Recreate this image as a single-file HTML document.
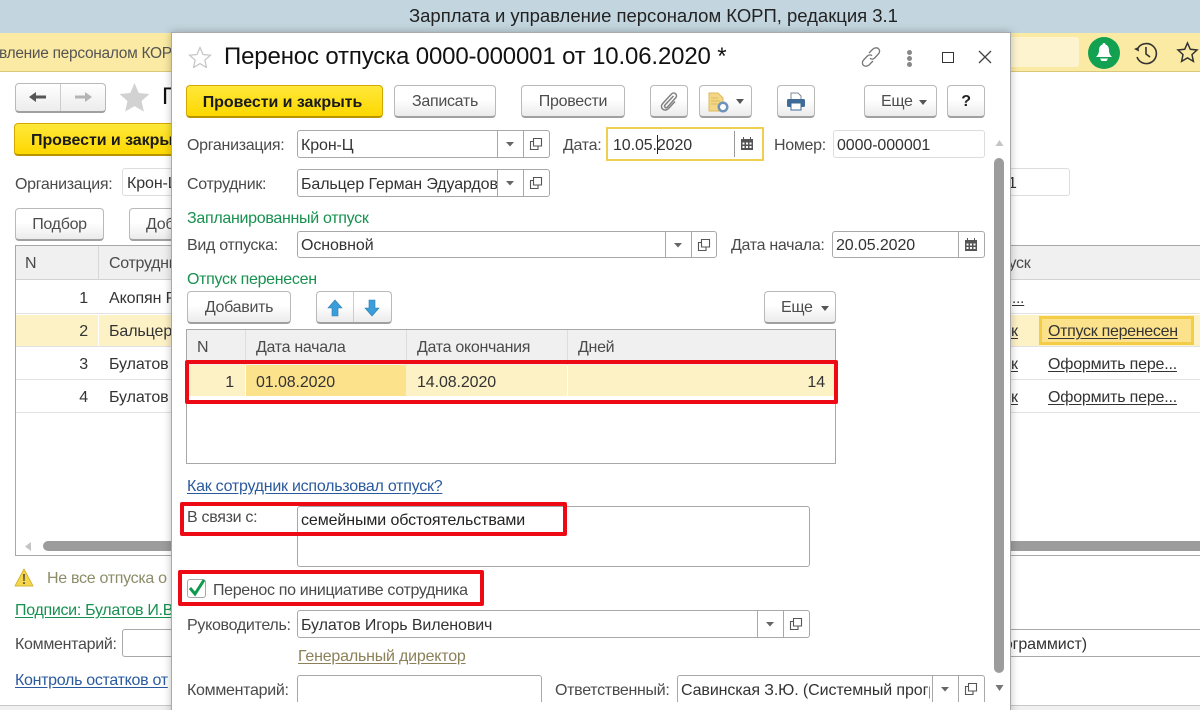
<!DOCTYPE html>
<html><head><meta charset="utf-8"><style>
html,body{margin:0;padding:0;background:#fff}
#r{position:relative;width:1200px;height:710px;overflow:hidden;background:#fff;font-family:"Liberation Sans","Noto Sans CJK SC",sans-serif;font-size:16px;letter-spacing:-.3px;color:#4a4a4a}
#r div,#r a,#r svg{position:absolute;box-sizing:border-box}
.t{white-space:nowrap;line-height:20px;height:20px;margin-top:2px}
.v{color:#333;letter-spacing:-.1px}
.b{border:1px solid #b9b9b9;border-bottom:2px solid #a0a0a0;border-radius:4px;background:linear-gradient(#fff 0%,#fff 45%,#ebebeb 100%);text-align:center;color:#4d4d4d;line-height:31px;white-space:nowrap}
.y{border:1px solid #d2a900;border-bottom:2px solid #b89400;border-radius:4px;background:linear-gradient(#ffe83a,#fdd800);text-align:center;color:#1a1a1a;font-weight:bold;letter-spacing:-.05px;line-height:33px;white-space:nowrap}
.f{border:1px solid #a8a8a8;border-radius:3px;background:#fff}
.lf{border:1px solid #ddd;border-radius:3px;background:#fff}
.d{width:1px;background:#a8a8a8}
.u{text-decoration:underline;text-underline-offset:2px}
.red{border:4px solid #ee0a14;border-radius:2px}
.l{height:1px;background:#e2e2e2}
</style></head><body><div id="r">

<!-- top bars -->
<div style="left:0;top:0;width:1200px;height:33px;background:#c3d5de"></div>
<div class="t" style="left:409px;top:6px;margin-top:0;font-size:18.5px;letter-spacing:-.02px;color:#222">Зарплата и управление персоналом КОРП, редакция 3.1</div>
<div style="left:0;top:33px;width:1200px;height:39px;background:#fbeaa3;border-bottom:1px solid #d9c877"></div>
<div class="t" style="left:-1px;top:42px;color:#555;font-size:15.5px">вление персоналом КОРП</div>
<div style="left:1005px;top:37px;width:74px;height:30px;background:#fdf4cf;border-radius:3px"></div>
<div style="left:1088px;top:37px;width:32px;height:32px;border-radius:50%;background:#12a150"></div>
<svg style="left:1094px;top:42px" width="20" height="22" viewBox="0 0 20 22"><path d="M10 1c-1 0-1.500.8-1.500 1.500C6 3.500 5 5.500 5 8c0 3-1 5-3 7h16c-2-2-3-4-3-7 0-2.500-1-4.500-3.500-5.500C11.500 1.800 11 1 10 1z" fill="#fff"/><path d="M6 16.500h8l-1.500 2.500h-5z" fill="#fff"/></svg>
<svg style="left:1132px;top:39px" width="28" height="28" viewBox="0 0 28 28" fill="none" stroke="#333" stroke-width="1.600"><path d="M5.500 10A10 10 0 1 1 5 18"/><path d="M14 8v7l4 3"/><path d="M2 10l4.500-2 .5 4.500z" fill="#333" stroke="none"/></svg>
<svg style="left:1176px;top:41px" width="23" height="23" viewBox="0 0 23 23"><path d="M11.500 2l2.800 6.300 6.700.7-5 4.600 1.400 6.800-5.900-3.500-5.900 3.500 1.400-6.800-5-4.600 6.700-.7z" fill="none" stroke="#333" stroke-width="1.500"/></svg>

<!-- background form -->
<div style="left:15px;top:83px;width:91px;height:30px;border:1px solid #b9b9b9;border-bottom:2px solid #a0a0a0;border-radius:4px;background:linear-gradient(#fff,#ececec)"></div>
<div class="d" style="left:60px;top:84px;height:27px;background:#ccc"></div>
<svg style="left:28px;top:89px" width="20" height="16" viewBox="0 0 20 16"><path d="M1 8l7-5v3.500h10v3H8V13z" fill="#555"/></svg>
<svg style="left:73px;top:89px" width="20" height="16" viewBox="0 0 20 16"><path d="M19 8l-7-5v3.500H2v3h10V13z" fill="#b4b4b4"/></svg>
<svg style="left:119px;top:82px" width="31" height="30" viewBox="0 0 31 30"><path d="M15.500 1l4.300 10 10.700 1-8 7.100 2.400 10.500-9.400-5.500-9.400 5.500 2.400-10.500-8-7.100 10.700-1z" fill="#d2d2d2"/></svg>
<div class="t" style="left:162px;top:87px;margin-top:0;font-size:24px;color:#111">П</div>
<div class="y" style="left:14px;top:123px;width:180px;height:33px;text-align:left;padding-left:16px">Провести и закрыть</div>
<div class="t" style="left:15px;top:173px">Организация:</div>
<div class="lf" style="left:122px;top:168px;width:60px;height:28px"></div>
<div class="t v" style="left:127px;top:172px">Крон-Ц</div>
<div class="lf" style="left:1000px;top:168px;width:70px;height:28px"></div>
<div class="t v" style="left:1008px;top:172px">1</div>
<div class="b" style="left:15px;top:208px;width:89px;height:33px">Подбор</div>
<div class="b" style="left:129px;top:208px;width:90px;height:33px;text-align:left;padding-left:16px">Добавить</div>

<div style="left:15px;top:245px;width:1200px;height:311px;border:1px solid #a8a8a8;background:#fff"></div>
<div style="left:16px;top:246px;width:1190px;height:34px;background:#f0f0f0;border-bottom:1px solid #d2d2d2"></div>
<div class="d" style="left:98px;top:246px;height:34px;background:#d8d8d8"></div>
<div class="t" style="left:25px;top:252px">N</div>
<div class="t" style="left:109px;top:252px">Сотрудник</div>
<div class="t" style="left:981px;top:252px">Отпуск</div>
<div style="left:16px;top:315px;width:1190px;height:31px;background:#fdf1c6"></div>
<div class="d" style="left:98px;top:315px;height:31px;background:#fff"></div>
<div class="l" style="left:16px;top:313px;width:1190px"></div>
<div class="l" style="left:16px;top:346px;width:1190px"></div>
<div class="l" style="left:16px;top:379px;width:1190px"></div>
<div class="l" style="left:16px;top:412px;width:1190px"></div>
<div class="t v" style="left:60px;top:287px;width:28px;text-align:right">1</div>
<div class="t v" style="left:60px;top:320px;width:28px;text-align:right">2</div>
<div class="t v" style="left:60px;top:353px;width:28px;text-align:right">3</div>
<div class="t v" style="left:60px;top:386px;width:28px;text-align:right">4</div>
<div class="t v" style="left:109px;top:287px">Акопян Р</div>
<div class="t v" style="left:109px;top:320px">Бальцер</div>
<div class="t v" style="left:109px;top:353px">Булатов</div>
<div class="t v" style="left:109px;top:386px">Булатов</div>
<div class="t v u" style="left:1012px;top:287px;font-size:15px">...</div>
<div class="t v u" style="left:1011px;top:320px">к</div>
<div class="t v u" style="left:1011px;top:353px">к</div>
<div class="t v u" style="left:1011px;top:386px">к</div>
<div style="left:1039px;top:316px;width:155px;height:29px;border:3px solid #f3cd47;background:#fde28c"></div>
<div class="t v u" style="left:1048px;top:320px;letter-spacing:-.3px">Отпуск перенесен</div>
<div class="t v u" style="left:1048px;top:353px;letter-spacing:-.2px">Оформить пере...</div>
<div class="t v u" style="left:1048px;top:386px;letter-spacing:-.2px">Оформить пере...</div>
<svg style="left:24px;top:542px" width="8" height="9" viewBox="0 0 8 9"><path d="M7 0v9L1 4.500z" fill="#c4c4c4"/></svg>
<div style="left:43px;top:541px;width:1170px;height:10px;border-radius:5px;background:#9c9c9c"></div>

<svg style="left:14px;top:568px" width="20" height="19" viewBox="0 0 20 19"><path d="M10 1L19 18H1z" fill="#f5d64a" stroke="#d4b73a" stroke-linejoin="round"/><path d="M9.200 6h1.600l-.2 7H9.400zM9.200 14.200h1.600v1.800H9.200z" fill="#444"/></svg>
<div class="t" style="left:47px;top:567px;color:#8c8c68">Не все отпуска о</div>
<div class="t u" style="left:15px;top:599px;color:#16914f">Подписи: Булатов И.В</div>
<div class="t" style="left:15px;top:633px">Комментарий:</div>
<div class="f" style="left:122px;top:629px;width:1100px;height:28px"></div>
<div class="t v" style="left:893px;top:633px">(Системный программист)</div>
<div class="t u" style="left:15px;top:669px;color:#2a5a9e">Контроль остатков от</div>
<div style="left:0;top:705px;width:1200px;height:5px;background:#f0f0f0;border-top:1px solid #c8c8c8"></div>

<!-- dialog -->
<div style="left:171px;top:32px;width:840px;height:690px;background:#fff;border:1px solid #a9a9a9;box-shadow:0 0 8px rgba(0,0,0,.25)"></div>
<svg style="left:188px;top:46px" width="24" height="22" viewBox="0 0 24 22"><path d="M12 1.500l3 7 7.500.7-5.700 5 1.700 7.300-6.500-3.900-6.500 3.900 1.700-7.300-5.700-5 7.500-.7z" fill="none" stroke="#c4c4c4" stroke-width="1.200"/></svg>
<div class="t" style="left:224px;top:46px;margin-top:0;font-size:24px;letter-spacing:-.15px;line-height:22px;height:22px;color:#111">Перенос отпуска 0000-000001 от 10.06.2020 *</div>
<svg style="left:860px;top:46px" width="22" height="22" viewBox="0 0 22 22" fill="none" stroke="#777" stroke-width="1.300"><path d="M9 7l4-4c2-1.600 4.500-1.500 5.600-.2 1.400 1.500 1.300 3.700-.2 5.200l-3.800 4c-1.500 1.500-3.500 1.500-4.600.2"/><path d="M13 15l-4 4c-2 1.600-4.500 1.500-5.600.2C2 17.700 2.100 15.500 3.600 14l3.800-4c1.500-1.500 3.500-1.500 4.600-.2"/></svg>
<div style="left:907px;top:50px;width:5px;height:5px;border-radius:50%;background:#888"></div>
<div style="left:907px;top:56px;width:5px;height:5px;border-radius:50%;background:#888"></div>
<div style="left:907px;top:62px;width:5px;height:5px;border-radius:50%;background:#888"></div>
<div style="left:942px;top:52px;width:12px;height:11px;border:1.500px solid #333"></div>
<svg style="left:978px;top:50px" width="14" height="14" viewBox="0 0 14 14"><path d="M1 1l12 12M13 1L1 13" stroke="#444" stroke-width="1.300"/></svg>

<div class="y" style="left:186px;top:85px;width:197px;height:33px;padding-right:4px">Провести и закрыть</div>
<div class="b" style="left:394px;top:85px;width:102px;height:33px">Записать</div>
<div class="b" style="left:521px;top:85px;width:104px;height:33px">Провести</div>
<div class="b" style="left:650px;top:85px;width:38px;height:33px"></div>
<svg style="left:659px;top:91px" width="20" height="21" viewBox="0 0 20 21" fill="none" stroke="#808080" stroke-width="1.500"><path d="M14.500 5L6 14c-1.500 1.600.8 3.700 2.300 2.200l8.400-9.400c2.500-3-1.500-6.600-4.200-3.800L3.700 12.500C0 17 5.500 21.500 9.500 17.500L16 10.500"/></svg>
<div class="b" style="left:699px;top:85px;width:53px;height:33px"></div>
<svg style="left:708px;top:92px" width="22" height="21" viewBox="0 0 22 21"><path d="M1 1h9l5 5v13H1z" fill="#f4d785" stroke="#dcb95c"/><path d="M3 6h7M3 9h9M3 12h7" stroke="#dcb95c"/><circle cx="15" cy="15" r="5.500" fill="#6f94ba"/><circle cx="15" cy="15" r="3" fill="#fff"/></svg>
<svg style="left:735px;top:99px" width="10" height="6" viewBox="0 0 10 6"><path d="M1 0h8L5 5z" fill="#555"/></svg>
<div class="b" style="left:777px;top:85px;width:38px;height:33px"></div>
<svg style="left:786px;top:92px" width="20" height="20" viewBox="0 0 20 20"><path d="M5 1h7l3 3v4H5z" fill="#fff" stroke="#7a8b9a"/><rect x="1" y="7" width="18" height="8" rx="1.500" fill="#3d6c99"/><path d="M5 11h10v7H5z" fill="#fff" stroke="#3d6c99"/></svg>
<div class="b" style="left:864px;top:85px;width:73px;height:33px;text-align:left;padding-left:16px">Еще</div>
<svg style="left:919px;top:100px" width="8" height="5" viewBox="0 0 8 5"><path d="M0 0h8L4 5z" fill="#555"/></svg>
<div class="b" style="left:947px;top:85px;width:38px;height:33px;color:#222;font-weight:bold">?</div>

<div class="t" style="left:187px;top:134px">Организация:</div>
<div class="f" style="left:297px;top:130px;width:253px;height:28px"></div>
<div class="d" style="left:497px;top:131px;height:26px"></div><div class="d" style="left:523px;top:131px;height:26px"></div>
<div class="t v" style="left:301px;top:134px">Крон-Ц</div>
<div class="t" style="left:563px;top:134px">Дата:</div>
<div style="left:606px;top:127px;width:158px;height:34px;border:2px solid #f1cf4e"></div>
<div class="d" style="left:734px;top:131px;height:26px;background:#999"></div>
<div class="t v" style="left:613px;top:134px">10.05.2020</div>
<div style="left:657px;top:135px;width:1px;height:19px;background:#222"></div>
<div class="t" style="left:774px;top:134px">Номер:</div>
<div class="lf" style="left:833px;top:130px;width:152px;height:28px"></div>
<div class="t v" style="left:837px;top:134px">0000-000001</div>

<div class="t" style="left:187px;top:173px">Сотрудник:</div>
<div class="f" style="left:297px;top:169px;width:253px;height:28px"></div>
<div class="t v" style="left:301px;top:173px;width:196px;overflow:hidden">Бальцер Герман Эдуардович</div>
<div class="d" style="left:497px;top:170px;height:26px"></div><div class="d" style="left:523px;top:170px;height:26px"></div>

<div class="t" style="left:187px;top:207px;color:#16914f">Запланированный отпуск</div>
<div class="t" style="left:187px;top:234px">Вид отпуска:</div>
<div class="f" style="left:297px;top:231px;width:420px;height:27px"></div>
<div class="d" style="left:665px;top:232px;height:25px"></div><div class="d" style="left:691px;top:232px;height:25px"></div>
<div class="t v" style="left:301px;top:234px">Основной</div>
<div class="t" style="left:731px;top:234px">Дата начала:</div>
<div class="f" style="left:832px;top:231px;width:153px;height:27px"></div>
<div class="d" style="left:958px;top:232px;height:25px"></div>
<div class="t v" style="left:836px;top:234px">20.05.2020</div>

<div class="t" style="left:187px;top:268px;color:#16914f">Отпуск перенесен</div>
<div class="b" style="left:187px;top:291px;width:104px;height:33px">Добавить</div>
<div class="b" style="left:316px;top:291px;width:76px;height:33px"></div>
<div class="d" style="left:353px;top:292px;height:30px;background:#ccc"></div>
<svg style="left:327px;top:299px" width="16" height="18" viewBox="0 0 16 18"><path d="M8 1l7 8h-4v8H5V9H1z" fill="#3a9edb" stroke="#2a7cb0" stroke-width=".6"/></svg>
<svg style="left:364px;top:299px" width="16" height="18" viewBox="0 0 16 18"><path d="M8 17l7-8h-4V1H5v8H1z" fill="#3a9edb" stroke="#2a7cb0" stroke-width=".6"/></svg>
<div class="b" style="left:764px;top:291px;width:72px;height:33px;text-align:left;padding-left:16px">Еще</div>
<svg style="left:821px;top:306px" width="8" height="5" viewBox="0 0 8 5"><path d="M0 0h8L4 5z" fill="#555"/></svg>

<div style="left:186px;top:329px;width:650px;height:135px;border:1px solid #a8a8a8;background:#fff"></div>
<div style="left:187px;top:330px;width:648px;height:35px;background:#f0f0f0"></div>
<div class="d" style="left:245px;top:330px;height:35px;background:#ddd"></div>
<div class="d" style="left:406px;top:330px;height:35px;background:#ddd"></div>
<div class="d" style="left:567px;top:330px;height:35px;background:#ddd"></div>
<div class="t" style="left:197px;top:336px">N</div>
<div class="t" style="left:256px;top:336px">Дата начала</div>
<div class="t" style="left:417px;top:336px">Дата окончания</div>
<div class="t" style="left:578px;top:336px">Дней</div>
<div style="left:187px;top:365px;width:648px;height:31px;background:#fdf1c6"></div>
<div style="left:246px;top:365px;width:160px;height:31px;background:#fde28c"></div>
<div class="d" style="left:245px;top:365px;height:31px;background:#fff"></div>
<div class="d" style="left:567px;top:365px;height:31px;background:#fff"></div>
<div class="t v" style="left:200px;top:371px;width:34px;text-align:right">1</div>
<div class="t v" style="left:256px;top:371px">01.08.2020</div>
<div class="t v" style="left:417px;top:371px">14.08.2020</div>
<div class="t v" style="left:780px;top:371px;width:45px;text-align:right">14</div>
<div class="red" style="left:185px;top:360px;width:653px;height:44px"></div>

<div class="t u" style="left:187px;top:475px;color:#2a5a9e;letter-spacing:-.25px">Как сотрудник использовал отпуск?</div>
<div class="t" style="left:187px;top:506px">В связи с:</div>
<div class="f" style="left:297px;top:506px;width:513px;height:61px"></div>
<div class="t v" style="left:301px;top:509px;color:#222;letter-spacing:-.1px">семейными обстоятельствами</div>
<div class="red" style="left:180px;top:502px;width:387px;height:34px"></div>

<div style="left:187px;top:579px;width:19px;height:19px;border:1px solid #a8a8a8;border-radius:3px;background:#fff"></div>
<svg style="left:188px;top:577px" width="18" height="20" viewBox="0 0 18 20"><path d="M2 11l5 6L16 3" fill="none" stroke="#0f9a4e" stroke-width="3"/></svg>
<div class="t" style="left:213px;top:579px;letter-spacing:-.33px">Перенос по инициативе сотрудника</div>
<div class="red" style="left:178px;top:570px;width:306px;height:36px"></div>

<div class="t" style="left:187px;top:614px">Руководитель:</div>
<div class="f" style="left:297px;top:610px;width:513px;height:28px"></div>
<div class="d" style="left:757px;top:611px;height:26px"></div><div class="d" style="left:783px;top:611px;height:26px"></div>
<div class="t v" style="left:301px;top:614px">Булатов Игорь Виленович</div>
<div class="t u" style="left:298px;top:645px;color:#8b8058;letter-spacing:-.2px">Генеральный директор</div>

<div class="t" style="left:187px;top:679px">Комментарий:</div>
<div class="f" style="left:297px;top:675px;width:245px;height:40px;background:transparent"></div>
<div class="t" style="left:555px;top:679px">Ответственный:</div>
<div class="f" style="left:677px;top:675px;width:308px;height:40px;background:transparent"></div>
<div class="d" style="left:932px;top:676px;height:26px"></div><div class="d" style="left:958px;top:676px;height:26px"></div>
<div class="t v" style="left:681px;top:679px;width:249px;overflow:hidden">Савинская З.Ю. (Системный программист)</div>
<div style="left:172px;top:702px;width:820px;height:8px;background:#fff"></div>

<!-- field icons -->
<svg style="left:0;top:0;overflow:visible" width="1200" height="710">
<defs>
<g id="dd"><path d="M-4 -2h8L0 2.500z" fill="#666"/></g>
<g id="op"><path d="M-2.500 -5.500h8v7.500h-8z M-2.500 -2.500h-3v8h7.500v-3.500" fill="none" stroke="#555" stroke-width="1.100"/></g>
<g id="cal"><path d="M-6 -5h12v11h-12z" fill="#555"/><path d="M-4 -7h1v3h-1zM3 -7h1v3h-1z" fill="#555"/><path d="M-4.500 -1.500h2v2h-2zM-1 -1.500h2v2h-2zM2.500 -1.500h2v2h-2zM-4.500 2h2v2h-2zM-1 2h2v2h-2zM2.500 2h2v2h-2z" fill="#fff"/></g>
</defs>
<use href="#dd" x="510" y="144"/><use href="#op" x="536" y="144"/>
<use href="#dd" x="510" y="183"/><use href="#op" x="536" y="183"/>
<use href="#dd" x="678" y="245"/><use href="#op" x="704" y="245"/>
<use href="#dd" x="770" y="624"/><use href="#op" x="796" y="624"/>
<use href="#dd" x="945" y="689"/><use href="#op" x="971" y="689"/>
<use href="#cal" x="747" y="144"/><use href="#cal" x="971" y="245"/>
</svg>

<svg style="left:995px;top:140px" width="9" height="7" viewBox="0 0 9 7"><path d="M4.500 0l4 6h-8z" fill="#c4c4c4"/></svg>
<div style="left:994px;top:158px;width:10px;height:515px;border-radius:5px;background:#9c9c9c"></div>
<svg style="left:995px;top:685px" width="9" height="7" viewBox="0 0 9 7"><path d="M4.500 6l4-6h-8z" fill="#777"/></svg>

</div></body></html>
